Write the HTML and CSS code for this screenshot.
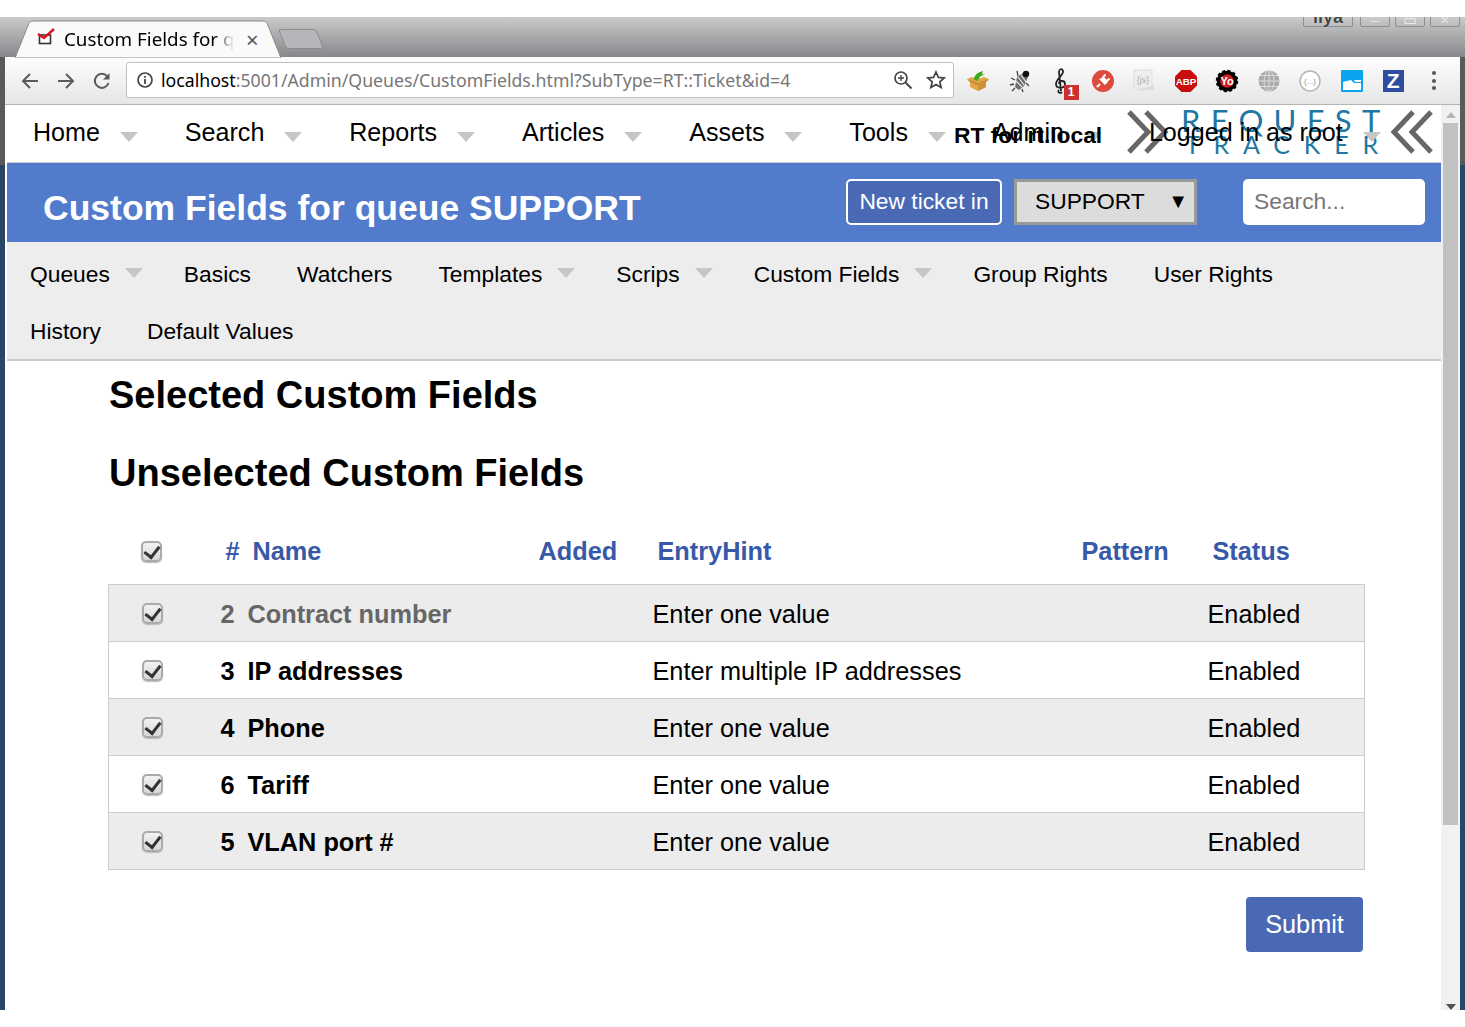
FILE: index.html
```html
<!DOCTYPE html>
<html lang="en">
<head>
  <meta charset="UTF-8">
  <title>Custom Fields for queue SUPPORT</title>
  <link rel="stylesheet" href="styles.css">
</head>
<body>

  <div class="window">

    <div class="tabstrip">
      <div class="tab">
        <svg class="tab-shape" width="266" height="38" viewBox="0 0 266 38">
          <path d="M0 38 L14 3 Q15 1 18 1 L248 1 Q251 1 252 3 L266 38 Z" fill="#fafafa" stroke="#8a8a8a"/>
        </svg>
        <svg class="favicon" width="20" height="18" viewBox="0 0 20 18">
          <rect x="2.5" y="7" width="11" height="8.5" fill="#fff" stroke="#333" stroke-width="1.6"/>
          <path d="M1 6 L7 10 L17 1" fill="none" stroke="#d8141c" stroke-width="2.4"/>
        </svg>
        <span class="tab-title">Custom Fields for queue SUPPORT</span>
        <span class="tab-close">×</span>
      </div>
      <div class="new-tab"></div>
      <div class="win-controls">
        <span class="win-user">ilya</span>
        <span class="win-btn">–</span>
        <span class="win-btn">▭</span>
        <span class="win-btn">×</span>
      </div>
    </div>

    <div class="toolbar">
      <div class="nav-btns">
        <svg width="20" height="20" viewBox="0 0 20 20"><path d="M18 10H3M10 3l-7 7 7 7" fill="none" stroke="#5a5a5a" stroke-width="2"/></svg>
        <svg width="20" height="20" viewBox="0 0 20 20"><path d="M2 10h15M10 3l7 7-7 7" fill="none" stroke="#5a5a5a" stroke-width="2"/></svg>
        <svg width="20" height="20" viewBox="0 0 20 20"><path d="M16.500 12a7 7 0 1 1-1.200-6.500" fill="none" stroke="#5a5a5a" stroke-width="2"/><path d="M17.500 2v6.500H11z" fill="#5a5a5a"/></svg>
      </div>
      <div class="urlbar">
        <svg width="18" height="18" viewBox="0 0 18 18"><circle cx="9" cy="9" r="7" fill="none" stroke="#444" stroke-width="1.7"/><path d="M9 8v5M9 5v1.800" stroke="#444" stroke-width="1.8"/></svg>
        <span class="url"><b>localhost</b>:5001/Admin/Queues/CustomFields.html?SubType=RT::Ticket&amp;id=4</span>
        <svg class="url-icon" width="20" height="20" viewBox="0 0 20 20"><circle cx="8" cy="8" r="6" fill="none" stroke="#444" stroke-width="1.7"/><path d="M12.500 12.500l6 6" stroke="#444" stroke-width="2"/><path d="M5 8h6M8 5v6" stroke="#444" stroke-width="1.4"/></svg>
        <svg class="url-icon" width="20" height="20" viewBox="0 0 20 20"><path d="M10 2l2.400 5.400 5.800.6-4.400 3.800 1.300 5.800L10 14.600l-5.100 3 1.300-5.800L1.800 8l5.800-.6z" fill="none" stroke="#444" stroke-width="1.7"/></svg>
      </div>
      <div class="extensions">
        <span class="ext"><svg width="24" height="24" viewBox="0 0 24 24"><path d="M1 10l5-2 6 2 6-2 5 2-3 3v5l-8 4-8-4v-5z" fill="#e2a54c"/><path d="M1 10l11 4 11-4-3 3-8 3-8-3z" fill="#c98a30"/><path d="M12 14v8l8-4v-5z" fill="#cf9238"/><path d="M8 11c0-5 4-8 9-9l-1 3 3 1c-4 0-6 2-7 6z" fill="#3fa81a"/></svg></span>
        <span class="ext"><svg width="24" height="24" viewBox="0 0 24 24"><path d="M9 8l6-4 5 4-4 9-5 4-4-3z" fill="#6e6e6e"/><path d="M10 8l6 8M8 12l6 6M13 6l5 7" stroke="#eee" stroke-width="1.100"/><circle cx="18" cy="5" r="3.200" fill="#111"/><path d="M10 7L9 2M7 11L3 9M6 15l-4 1M7 19l-3 3M14 20l1 3M18 14l3 3" stroke="#444" stroke-width="1.300"/></svg></span>
        <span class="ext ext-music">
          <svg width="20" height="28" viewBox="0 0 20 28"><path d="M11 25c-2 2-5 0-3-2M10 24L8 5c0-3 3-4 4-1 1 4-7 8-7 13 0 5 9 5 9 0 0-4-6-4-6 0" fill="none" stroke="#222" stroke-width="1.800"/></svg>
          <span class="ext-badge">1</span>
        </span>
        <span class="ext"><svg width="22" height="22" viewBox="0 0 22 22"><circle cx="11" cy="11" r="11" fill="#dc4b3e"/><path d="M5 17l3-3" stroke="#fff" stroke-width="2.200"/><path d="M7 9l6 6 2-2c1-1 1-2 0-3l-2-2c-1-1-2-1-3 0z" fill="#fff"/><path d="M10.500 8l3-3.500M14 11.500l3.500-3" stroke="#fff" stroke-width="2"/></svg></span>
        <span class="ext"><svg width="22" height="24" viewBox="0 0 22 24"><rect x="1" y="1" width="18" height="18" fill="#eee" stroke="#ddd"/><path d="M2 22l19-6v5z" fill="#ddd"/><text x="10" y="14" class="js-text">{js}</text></svg></span>
        <span class="ext"><svg width="22" height="22" viewBox="0 0 22 22"><path d="M6.500 0h9L22 6.500v9L15.500 22h-9L0 15.500v-9z" fill="#c70d0d"/><text x="11" y="15" class="abp-text">ABP</text></svg></span>
        <span class="ext"><svg width="24" height="24" viewBox="0 0 24 24"><circle cx="12" cy="12" r="8.500" fill="#d01f25" stroke="#000" stroke-width="3.500"/><circle cx="12" cy="12" r="10" fill="none" stroke="#000" stroke-width="2.500" stroke-dasharray="3 2.250"/><text x="12" y="16" class="yt-text">Yo</text></svg></span>
        <span class="ext"><svg width="22" height="22" viewBox="0 0 22 22"><circle cx="11" cy="11" r="10.500" fill="#aaa"/><g fill="none" stroke="#ddd"><ellipse cx="11" cy="11" rx="5" ry="10.500"/><path d="M11 0v22M0 11h22M2 5.500h18M2 16.500h18"/></g></svg></span>
        <span class="ext"><svg width="22" height="22" viewBox="0 0 22 22"><circle cx="11" cy="11" r="10" fill="#fff" stroke="#b5b5b5" stroke-width="1.500"/><text x="11" y="14" class="json-text">{...}</text></svg></span>
        <span class="ext"><svg width="22" height="22" viewBox="0 0 22 22"><rect width="22" height="22" rx="1" fill="#0aa5ee"/><path d="M2 12l8-2 3 3h7v7H2z" fill="#fff"/><path d="M13 10h7v2h-6z" fill="#fff"/></svg></span>
        <span class="ext"><span class="ext-z">Z</span></span>
      </div>
      <span class="menu-dots"><i></i><i></i><i></i></span>
    </div>

    <div class="viewport">
      <div class="page">

        <div class="topbar">
          <ul class="main-menu">
            <li>Home</li>
            <li>Search</li>
            <li>Reports</li>
            <li>Articles</li>
            <li>Assets</li>
            <li>Tools</li>
            <li>Admin</li>
            <li>Logged in as root</li>
          </ul>
          <div class="rt-name">RT for rt.local</div>
          <div class="logo">
            <svg class="logo-left" width="42" height="46" viewBox="0 0 42 46"><path d="M2 3l19 20L2 43M19 3l19 20-19 20" fill="none" stroke="#666" stroke-width="5"/></svg>
            <div class="logo-text">
              <span class="logo-request">REQUEST</span>
              <span class="logo-tracker">TRACKER</span>
            </div>
            <svg class="logo-right" width="44" height="46" viewBox="0 0 44 46"><path d="M42 3L23 23l19 20M24 3L5 23l19 20" fill="none" stroke="#666" stroke-width="5"/></svg>
          </div>
        </div>

        <div class="header">
          <h1>Custom Fields for queue SUPPORT</h1>
          <div class="header-tools">
            <button class="new-ticket">New ticket in</button>
            <div class="queue-select"><span>SUPPORT</span><span class="queue-arrow">▼</span></div>
            <input class="search" type="text" placeholder="Search...">
          </div>
        </div>

        <ul class="sub-menu">
          <li class="has-arrow">Queues</li>
          <li>Basics</li>
          <li>Watchers</li>
          <li class="has-arrow">Templates</li>
          <li class="has-arrow">Scrips</li>
          <li class="has-arrow">Custom Fields</li>
          <li>Group Rights</li>
          <li>User Rights</li>
          <li>History</li>
          <li>Default Values</li>
        </ul>

        <div class="content">
          <h2>Selected Custom Fields</h2>
          <h2>Unselected Custom Fields</h2>

          <table class="cf-table">
            <colgroup>
              <col class="c-check"><col class="c-id"><col class="c-name"><col class="c-added"><col class="c-hint"><col class="c-pattern"><col class="c-status">
            </colgroup>
            <thead>
              <tr>
                <th class="check-head"><input type="checkbox" checked></th>
                <th class="th-id">#</th>
                <th>Name</th>
                <th class="th-flush">Added</th>
                <th>EntryHint</th>
                <th class="th-flush">Pattern</th>
                <th>Status</th>
              </tr>
            </thead>
            <tbody>
              <tr class="odd disabled">
                <td class="check-cell"><input type="checkbox" checked></td>
                <td class="cf-id">2</td><td class="cf-name">Contract number</td><td></td>
                <td>Enter one value</td><td></td><td>Enabled</td>
              </tr>
              <tr>
                <td class="check-cell"><input type="checkbox" checked></td>
                <td class="cf-id">3</td><td class="cf-name">IP addresses</td><td></td>
                <td>Enter multiple IP addresses</td><td></td><td>Enabled</td>
              </tr>
              <tr class="odd">
                <td class="check-cell"><input type="checkbox" checked></td>
                <td class="cf-id">4</td><td class="cf-name">Phone</td><td></td>
                <td>Enter one value</td><td></td><td>Enabled</td>
              </tr>
              <tr>
                <td class="check-cell"><input type="checkbox" checked></td>
                <td class="cf-id">6</td><td class="cf-name">Tariff</td><td></td>
                <td>Enter one value</td><td></td><td>Enabled</td>
              </tr>
              <tr class="odd">
                <td class="check-cell"><input type="checkbox" checked></td>
                <td class="cf-id">5</td><td class="cf-name">VLAN port #</td><td></td>
                <td>Enter one value</td><td></td><td>Enabled</td>
              </tr>
            </tbody>
          </table>

          <div class="form-actions">
            <button class="submit">Submit</button>
          </div>
        </div>
      </div>

      <div class="scrollbar">
        <span class="scroll-up"></span>
        <div class="scroll-thumb"></div>
        <span class="scroll-down"></span>
      </div>
    </div>
  </div>

</body>
</html>
```

FILE: styles.css
```css
* {
  box-sizing: border-box;
}

html, body {
  margin: 0;
  height: 100%;
  background: #fff;
  overflow: hidden;
}

body {
  font-family: 'Liberation Sans', Arial, sans-serif;
  color: #000;
}

ul {
  list-style: none;
  margin: 0;
  padding: 0;
}

/* browser window */
.window {
  margin-top: 17px;
  height: 993px;
  display: flex;
  flex-direction: column;
  background: linear-gradient(to bottom, #5a5a5a 0, #5a5a5a 148px, #2a4666 148px);
  padding: 0 5px;
  overflow: hidden;
}

.tabstrip {
  height: 40px;
  flex: none;
  margin: 0 -5px;
  padding-left: 15px;
  display: flex;
  position: relative;
  background: linear-gradient(to bottom, #cbcbcb, #85878a);
}

.tab {
  position: relative;
  width: 266px;
  height: 38px;
  margin-top: 3px;
  padding: 5px 0 0 49px;
  display: flex;
  align-items: flex-start;
  font-family: 'Noto Sans', sans-serif;
  font-size: 18.800px;
}

.tab-shape {
  position: absolute;
  left: 0;
  top: 0;
}

.favicon {
  position: absolute;
  left: 22px;
  top: 8px;
}

.tab-title {
  position: relative;
  width: 170px;
  height: 28px;
  line-height: 28px;
  white-space: nowrap;
  overflow: hidden;
  -webkit-mask-image: linear-gradient(to right, #000 150px, transparent 170px);
  mask-image: linear-gradient(to right, #000 150px, transparent 170px);
}

.tab-close {
  position: absolute;
  left: 231px;
  top: 5px;
  line-height: 28px;
  font-size: 22px;
  color: #555;
}

.new-tab {
  width: 38px;
  height: 20px;
  margin: 12px 0 0 1px;
  background: #b4b6b9;
  border: 1px solid #8a8c8f;
  border-radius: 3px;
  transform: skewX(22deg);
}

.win-controls {
  position: absolute;
  right: 5px;
  top: -4px;
  display: flex;
  gap: 5px;
}

.win-user, .win-btn {
  height: 14px;
  border: 1px solid #8f8f8f;
  border-radius: 2px;
  text-align: center;
  font-size: 15px;
  line-height: 11px;
  color: #e8e8e8;
  width: 30px;
}

.win-user {
  width: 50px;
  margin-right: 2px;
  font-size: 18px;
  line-height: 7px;
  font-weight: bold;
  color: #444;
  text-shadow: 0 0 1px #fff;
}

.toolbar {
  height: 48px;
  flex: none;
  display: flex;
  align-items: center;
  background: linear-gradient(to bottom, #fdfdfd, #e6e6e6);
  border-bottom: 1px solid #b4b4b4;
}

.nav-btns {
  width: 121px;
  padding-left: 15px;
  display: flex;
  gap: 16px;
}

.urlbar {
  width: 828px;
  height: 36px;
  margin-top: -1px;
  display: flex;
  align-items: center;
  gap: 7px;
  padding: 0 7px 0 9px;
  background: #fff;
  border: 1px solid #c0c0c0;
  border-radius: 3px;
  font-family: 'Noto Sans', sans-serif;
  font-size: 17.700px;
}

.url {
  flex: 1;
  color: #777;
  white-space: nowrap;
}

.url b {
  font-weight: normal;
  color: #000;
}

.url-icon {
  margin-left: 6px;
}

.extensions {
  display: flex;
  padding-left: 3.500px;
}

.ext {
  width: 41.500px;
  height: 40px;
  display: flex;
  align-items: center;
  justify-content: center;
  position: relative;
}

.ext-badge {
  position: absolute;
  left: 23px;
  bottom: 1px;
  width: 15px;
  height: 15px;
  background: #c9302f;
  color: #fff;
  font-size: 12px;
  font-weight: bold;
  line-height: 15px;
  text-align: center;
}

.ext-z {
  width: 21px;
  height: 22px;
  background: #2f4da0;
  color: #fff;
  font-size: 21px;
  font-weight: bold;
  line-height: 22px;
  text-align: center;
}

.js-text, .abp-text, .yt-text, .json-text {
  font-family: 'Liberation Sans', sans-serif;
  text-anchor: middle;
}

.js-text {
  font-size: 9px;
  fill: #aaa;
}

.abp-text {
  font-size: 9.800px;
  font-weight: bold;
  fill: #fff;
}

.yt-text {
  font-size: 11px;
  font-weight: bold;
  fill: #fff;
}

.json-text {
  font-size: 8px;
  fill: #999;
}

.menu-dots {
  margin-left: 18px;
  display: flex;
  flex-direction: column;
  gap: 3.500px;
}

.menu-dots i {
  width: 4px;
  height: 4px;
  border-radius: 50%;
  background: #555;
}

/* page + scrollbar */
.viewport {
  flex: 1;
  min-height: 0;
  display: flex;
  background: #fff;
  padding-left: 2px;
}

.page {
  width: 1434px;
  background: #fff;
  flex: none;
}

.scrollbar {
  flex: 1;
  display: flex;
  flex-direction: column;
  align-items: center;
  background: #f1f1f1;
  padding: 0 2px;
  position: relative;
}

.scroll-up, .scroll-down {
  width: 0;
  height: 0;
  border: 5px solid transparent;
}

.scroll-up {
  margin-top: 7px;
  border-bottom: 6px solid #b5b5b5;
  border-top: none;
}

.scroll-thumb {
  width: 100%;
  height: 702px;
  margin-top: 5px;
  background: #c1c1c1;
}

.scroll-down {
  margin-top: auto;
  border-top: 6px solid #505050;
  border-bottom: none;
}

/* rt top menu */
.topbar {
  position: relative;
  height: 58px;
  border-bottom: 1px solid #ccc;
}

.main-menu {
  position: relative;
  z-index: 2;
  display: flex;
  padding-left: 26px;
  gap: 46.900px;
  font-size: 25.100px;
  line-height: 54px;
}

.main-menu li {
  display: flex;
  gap: 20px;
}

.main-menu li::after,
.sub-menu .has-arrow::after {
  content: "";
  width: 0;
  height: 0;
  border-left: 9px solid transparent;
  border-right: 9px solid transparent;
  border-top: 10px solid #c6c6c6;
}

.main-menu li::after {
  margin-top: 27px;
}

.rt-name {
  position: absolute;
  z-index: 3;
  left: 947px;
  top: 17px;
  font-size: 22.800px;
  font-weight: bold;
}

.logo {
  position: absolute;
  right: 8px;
  top: 3px;
  display: flex;
  align-items: center;
  pointer-events: none;
}

.logo-left {
  margin-right: 12px;
}

.logo-right {
  margin-left: 4px;
}

.logo-text {
  width: 204px;
  display: flex;
  flex-direction: column;
  font-family: Lato, sans-serif;
  font-weight: 400;
  color: #1f78a4;
  text-align: left;
}

.logo-request {
  font-size: 31px;
  line-height: 25px;
  letter-spacing: 10.300px;
  white-space: nowrap;
}

.logo-tracker {
  font-size: 25px;
  line-height: 22px;
  letter-spacing: 13.800px;
  white-space: nowrap;
  padding-left: 4px;
}

/* blue header */
.header {
  height: 79px;
  background: #527bcc;
  display: flex;
  align-items: flex-start;
  justify-content: space-between;
  padding: 16px 16px 0 36px;
}

h1 {
  margin: 0;
  padding-top: 9px;
  font-size: 35.500px;
  font-weight: bold;
  color: #fff;
}

.header-tools {
  display: flex;
  font-size: 22.800px;
}

.new-ticket {
  width: 156px;
  height: 46px;
  padding: 0 0 2px;
  background: #4a69b5;
  color: #fff;
  border: 2px solid #fff;
  border-radius: 5px;
  font: inherit;
}

.queue-select {
  width: 183px;
  height: 46px;
  margin-left: 12px;
  padding: 0 6px 2px 18px;
  display: flex;
  align-items: center;
  justify-content: space-between;
  background: #dcdcdc;
  border: 3px solid #999;
}

.queue-arrow {
  font-size: 20px;
}

.search {
  width: 182px;
  height: 46px;
  margin-left: 46px;
  padding: 0 11px 2px;
  border: none;
  border-radius: 5px;
  background: #fff;
  font: inherit;
}

.search::placeholder {
  color: #777;
}

/* queue sub menu */
.sub-menu {
  height: 119px;
  padding: 4px 90px 0 23px;
  display: flex;
  flex-wrap: wrap;
  column-gap: 46px;
  align-content: flex-start;
  background: #ededed;
  border-bottom: 2px solid #ccc;
  font-size: 22.800px;
  line-height: 57px;
}

.sub-menu li {
  display: flex;
}

.sub-menu .has-arrow {
  gap: 15px;
  margin-right: -5px;
}

.sub-menu .has-arrow::after {
  margin-top: 22px;
}

/* main content */
.content {
  padding: 0 76px 0 102px;
}

h2 {
  margin: 0;
  font-size: 38px;
  line-height: 44px;
  font-weight: bold;
}

h2:first-child {
  padding-top: 12px;
}

h2 + h2 {
  margin-top: 34px;
}

.cf-table {
  width: 1257px;
  margin: 29px 0 0 -1px;
  table-layout: fixed;
  border-collapse: collapse;
  font-size: 25.300px;
}

.c-check { width: 111px; }
.c-id { width: 28px; }
.c-name { width: 291px; }
.c-added { width: 114px; }
.c-hint { width: 429px; }
.c-pattern { width: 126px; }

.cf-table th {
  height: 60px;
  padding: 0 0 5px 5px;
  text-align: left;
  color: #3858a8;
  white-space: nowrap;
}

.cf-table .th-id {
  padding-left: 6px;
}

.cf-table .th-flush {
  padding-left: 0;
}

.cf-table td {
  height: 57px;
  padding: 4px 0 0;
  white-space: nowrap;
}

.cf-table td.check-cell {
  padding-top: 2px;
}

.cf-table td.cf-id {
  padding-left: 1px;
}

.cf-table tbody tr {
  border: 1px solid #ccc;
}

.cf-table tr.odd {
  background: #ececec;
}

.cf-id, .cf-name {
  font-weight: bold;
}

.disabled .cf-id, .disabled .cf-name {
  color: #666;
}

.check-head {
  text-align: left;
}

.check-head input {
  margin-left: 27px;
}

.check-cell input {
  margin-left: 33px;
}

input[type="checkbox"] {
  appearance: none;
  -webkit-appearance: none;
  display: block;
  width: 21px;
  height: 21px;
  margin-top: 0;
  margin-bottom: 0;
  margin-right: 0;
  position: relative;
  border: 2px solid #aaa;
  border-radius: 5px;
  background: linear-gradient(to bottom, #f2f2f2, #d8d8d8);
  box-shadow: 0 1px 1px #bbb;
}

/* check mark */
input[type="checkbox"]::after {
  content: "";
  position: absolute;
  left: 4px;
  top: 0;
  width: 7px;
  height: 12px;
  border-right: 3.500px solid #333;
  border-bottom: 3px solid #333;
  transform: rotate(38deg);
}

.form-actions {
  display: flex;
  justify-content: flex-end;
  padding-top: 27px;
  width: 1254px;
}

.submit {
  width: 117px;
  height: 55px;
  padding: 0;
  border: none;
  border-radius: 4px;
  background: #4a69b5;
  color: #fff;
  font-family: inherit;
  font-size: 25.300px;
}
```
